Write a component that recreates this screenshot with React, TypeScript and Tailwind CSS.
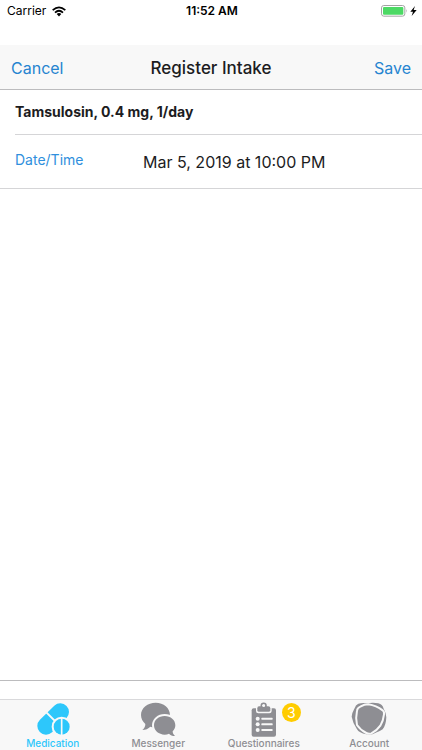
import type { ReactNode } from "react";

function WifiIcon() {
  return (
    <svg viewBox="0 0 42 32" className="h-[11px] w-[14px]" aria-hidden="true">
      <g fill="none" stroke="#000" strokeWidth="5">
        <path d="M2 12 Q21 -5 40 12" />
        <path d="M9 19.500 Q21 8 33 19.500" />
      </g>
      <path d="M14 23.500 Q21 17 28 23.500 L21 31 Z" fill="#000" />
    </svg>
  );
}

function BatteryIcon() {
  return (
    <svg viewBox="0 0 108 36" className="h-3 w-9" aria-hidden="true">
      <rect x="1.500" y="1.500" width="70" height="32" rx="7" fill="#fff" stroke="#a3a3a3" strokeWidth="3" />
      <rect x="6" y="6" width="61" height="23" rx="3" fill="#4cd964" />
      <path d="M75 12 Q79 17.500 75 23 Z" fill="#a3a3a3" />
      <path d="M102 3 L88 20 H96 L92 33 L107 15 H98 Z" fill="#000" />
    </svg>
  );
}

function PillsIcon() {
  return (
    <svg viewBox="0 0 102 102" className="size-[34px]" aria-hidden="true">
      <path d="M73 30 L30 72" stroke="currentColor" strokeWidth="52" strokeLinecap="round" />
      <path d="M31 31 L73 73" stroke="#f8f8f8" strokeWidth="6" />
      <circle cx="77" cy="74" r="30" fill="#f8f8f8" />
      <circle cx="77" cy="74" r="24" fill="currentColor" />
      <path d="M77 48 V100" stroke="#f8f8f8" strokeWidth="5" />
    </svg>
  );
}

function BubblesIcon() {
  return (
    <svg viewBox="0 0 108 102" className="h-[34px] w-9" aria-hidden="true">
      <path
        d="M47 2 C71 2 90 18 90 39 C90 60 71 77 47 77 C41 77 36 76 31 74 C25 80 17 84 7 84 C13 79 16 73 16 66 C8 59 3 50 3 39 C3 18 23 2 47 2 Z"
        fill="currentColor"
      />
      <path
        d="M74 42 C92 42 106 54 106 70 C106 77 103 83 98 88 C98 93 100 98 105 102 C97 102 91 99 87 95 C83 97 79 98 74 98 C56 98 42 86 42 70 C42 54 56 42 74 42 Z"
        fill="currentColor"
        stroke="#f8f8f8"
        strokeWidth="12"
        paintOrder="stroke"
      />
    </svg>
  );
}

function ClipboardIcon() {
  return (
    <svg viewBox="0 0 78 105" className="h-[35px] w-[26px]" aria-hidden="true">
      <rect x="2" y="19" width="73" height="85" rx="6" fill="currentColor" />
      <path d="M15 18 H62 V27 Q62 34 55 34 H22 Q15 34 15 27 Z" fill="#f8f8f8" />
      <circle cx="38" cy="11" r="7" fill="none" stroke="currentColor" strokeWidth="5" />
      <path d="M24 13 H52 Q58 13 58 19 V25 Q58 29 54 29 H23 Q19 29 19 25 V19 Q19 13 24 13 Z" fill="currentColor" />
      <circle cx="38" cy="11" r="4" fill="#f8f8f8" />
      <g fill="#f8f8f8">
        <circle cx="20" cy="50" r="6" />
        <circle cx="20" cy="67" r="6" />
        <circle cx="20" cy="84" r="6" />
        <rect x="31" y="47" width="34" height="6" rx="2" />
        <rect x="31" y="64" width="34" height="6" rx="2" />
        <rect x="31" y="81" width="34" height="6" rx="2" />
      </g>
    </svg>
  );
}

function AccountIcon() {
  return (
    <svg viewBox="0 0 108 102" className="h-[34px] w-9" aria-hidden="true">
      <path
        d="M22 5 Q34 2 48 4 Q66 1 82 4 Q94 7 98 20 Q106 34 106 46 Q105 70 95 82 Q88 88 74 92 Q60 101 46 97 Q24 93 18 82 Q5 62 2 44 Q2 34 10 20 Q14 8 22 5 Z"
        fill="currentColor"
      />
      <path
        d="M18 26 Q19 18 28 14 Q40 7 52 7 Q76 11 95 25 Q100 29 99 37 Q97 56 88 71 Q78 86 61 94 Q54 97 46 93 Q28 84 18 69 Q13 48 18 26 Z"
        fill="none"
        stroke="#f8f8f8"
        strokeWidth="6"
        strokeLinejoin="round"
      />
    </svg>
  );
}

type TabProps = {
  label: string;
  icon: ReactNode;
  active?: boolean;
  badge?: number;
};

function Tab({ label, icon, active, badge }: TabProps) {
  return (
    <a
      href="#"
      aria-current={active ? "page" : undefined}
      className={`flex flex-1 flex-col items-center pt-px ${active ? "text-[#2dc7fb]" : "text-[#8e8e93]"}`}
    >
      <span className="relative flex h-9 items-center justify-center">
        {icon}
        {badge && (
          <span className="absolute top-[2px] left-full ml-[5px] flex size-[19px] items-center justify-center rounded-full bg-[#ffcc00] text-[14px] leading-none text-white">
            {badge}
          </span>
        )}
      </span>
      <span className="text-[10px] leading-3 font-medium">{label}</span>
    </a>
  );
}

export default function App() {
  return (
    <div className="flex min-h-screen flex-col bg-white font-['Inter',sans-serif] text-[#1c1c1e]">
      {/* Status bar */}
      <div className="grid h-[45px] grid-cols-3 items-start pr-[5px] pl-[7px] text-[12px] leading-[22px] text-black">
        <div className="flex items-center gap-[6px]">
          <span>Carrier</span>
          <WifiIcon />
        </div>
        <span className="text-center font-semibold">11:52 AM</span>
        <div className="flex h-[22px] items-center justify-end">
          <BatteryIcon />
        </div>
      </div>

      {/* Navigation bar */}
      <header className="grid h-[45px] grid-cols-[1fr_auto_1fr] items-center border-b border-[#bcbcbe] bg-[#f8f8f8] px-[11px] pt-[2px] text-[16px] leading-6">
        <button type="button" className="justify-self-start text-[#2684d0]">
          Cancel
        </button>
        <h1 className="text-[17px] font-medium">Register Intake</h1>
        <button type="button" className="justify-self-end text-[#2684d0]">
          Save
        </button>
      </header>

      {/* Intake form */}
      <main className="flex-1 border-b border-[#bcbcbe]">
        <h2 className="ml-[15px] border-b border-[#d5d5d7] py-3 text-[14px] leading-5 font-bold">
          Tamsulosin, 0.4 mg, 1/day
        </h2>
        <div className="flex h-[54px] items-center border-b border-[#d5d5d7] pl-[15px]">
          <label htmlFor="intake-time" className="w-32 pb-1 text-[14px] leading-5 text-[#2f8fdd]">
            Date/Time
          </label>
          <input
            id="intake-time"
            type="text"
            defaultValue="Mar 5, 2019 at 10:00 PM"
            className="min-w-0 flex-1 bg-transparent text-[16px] leading-6 outline-none"
          />
        </div>
      </main>

      {/* Tab bar */}
      <nav className="mt-[18px] flex h-[51px] border-t border-[#d9d9db] bg-[#f8f8f8]">
        <Tab label="Medication" icon={<PillsIcon />} active />
        <Tab label="Messenger" icon={<BubblesIcon />} />
        <Tab label="Questionnaires" icon={<ClipboardIcon />} badge={3} />
        <Tab label="Account" icon={<AccountIcon />} />
      </nav>
    </div>
  );
}
